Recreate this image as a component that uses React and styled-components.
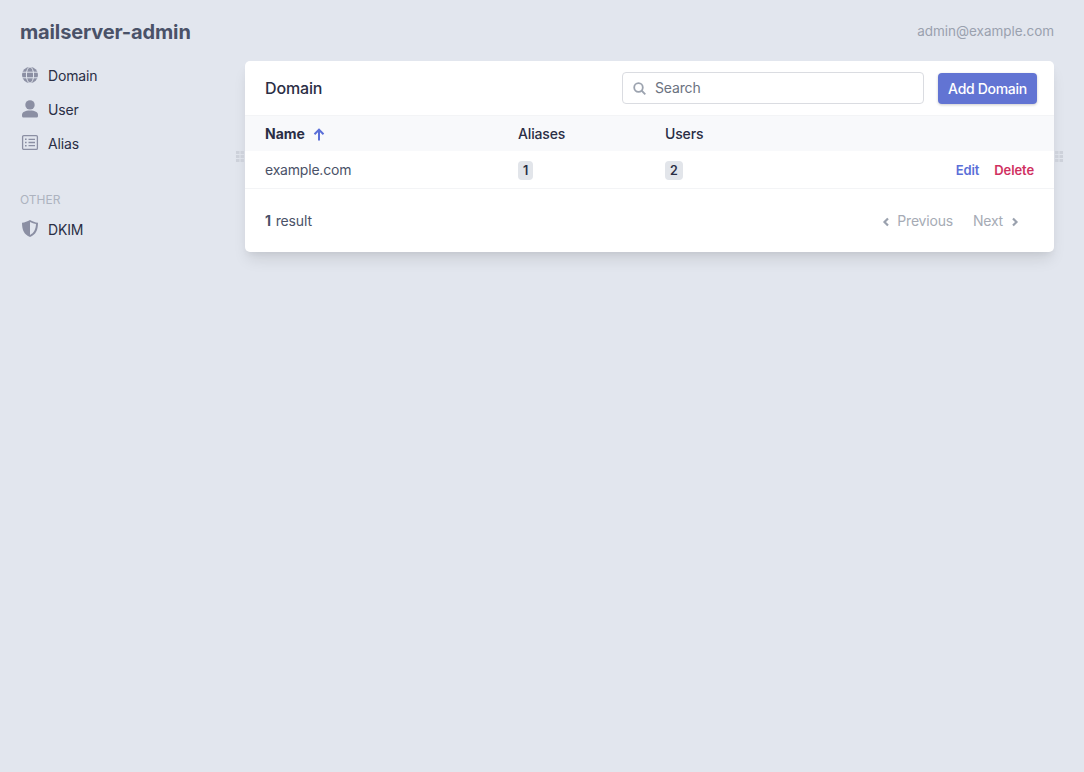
import React from "react";
import styled, { createGlobalStyle } from "styled-components";

const PAGE_BG = "#e2e6ee";

const GlobalStyle = createGlobalStyle`
  html, body {
    margin: 0;
    padding: 0;
    background: ${PAGE_BG};
  }
  body {
    font-family: Inter, "Liberation Sans", sans-serif;
    font-size: 14px;
    letter-spacing: -0.15px;
    color: #2a2e45;
  }
  * {
    box-sizing: border-box;
  }
`;

const Page = styled.div`
  min-height: 772px;
  padding: 20px 30px 0 20px;
`;

const Header = styled.header`
  display: flex;
  justify-content: space-between;
  align-items: center;
  height: 23px;
`;

const Brand = styled.h1`
  margin: 0;
  padding-top: 1px;
  font-size: 20px;
  line-height: 23px;
  font-weight: 700;
  letter-spacing: -0.14px;
  color: #4a5268;
`;

const Account = styled.span`
  font-size: 13.5px;
  line-height: 21px;
  letter-spacing: -0.03px;
  color: #9aa1ae;
`;

const Layout = styled.div`
  display: grid;
  grid-template-columns: 225px 809px;
  margin-top: 15px;
`;

const Sidebar = styled.nav`
  display: flex;
  flex-direction: column;
`;

const NavItem = styled.a`
  display: flex;
  align-items: center;
  gap: 8px;
  height: 34px;
  color: #2a2e45;
  font-size: 14px;
  svg {
    flex: none;
    color: #8b8fa3;
  }
`;

const NavHeading = styled.div`
  margin: 31px 0 4px;
  height: 17px;
  font-size: 12px;
  line-height: 17px;
  letter-spacing: 0;
  color: #adb3bf;
`;

const CardWrap = styled.div`
  position: relative;
  margin-top: 3px;
`;

const Card = styled.section`
  background: #fff;
  border-radius: 5px;
  box-shadow: 0 10px 15px -3px rgba(0, 0, 0, 0.1), 0 4px 6px -2px rgba(0, 0, 0, 0.05);
`;

const Handle = styled.svg`
  position: absolute;
  top: 90px;
  ${(p) => (p.$side === "left" ? "left: -9px;" : "right: -9px;")}
  color: #cdd1da;
`;

const CardHeader = styled.div`
  display: flex;
  align-items: center;
  height: 54px;
  padding: 0 17px 0 20px;
`;

const CardTitle = styled.h2`
  flex: 1;
  margin: 0;
  font-size: 16px;
  font-weight: 500;
  color: #2a2e45;
`;

const SearchBox = styled.label`
  display: flex;
  align-items: center;
  gap: 9px;
  width: 302px;
  height: 32px;
  padding: 0 10px;
  border: 1px solid #dadce1;
  border-radius: 4px;
  color: #6b7280;
  font-size: 14px;
  svg {
    flex: none;
    color: #9ca3af;
  }
`;

const SearchInput = styled.input`
  flex: 1;
  min-width: 0;
  height: 28px;
  border: 0;
  outline: 0;
  padding: 0 0 2px;
  background: transparent;
  font: inherit;
  letter-spacing: inherit;
  color: inherit;
  &::placeholder {
    color: #6b7280;
    opacity: 1;
  }
`;

const AddButton = styled.button`
  margin-left: 14px;
  width: 99px;
  height: 31px;
  padding: 0;
  border: 0;
  border-radius: 4px;
  background: #6274d3;
  color: #fff;
  font: 500 14px Inter, "Liberation Sans", sans-serif;
  letter-spacing: -0.3px;
  box-shadow: 0 1px 3px rgba(0, 0, 0, 0.2);
`;

const Table = styled.table`
  width: 100%;
  border-collapse: collapse;
  table-layout: fixed;
  font-size: 14px;
`;

const Head = styled.thead`
  background: #f8f9fb;
`;

const Th = styled.th`
  height: 35px;
  padding: 0 0 0 ${(p) => (p.$first ? "20px" : "0")};
  width: ${(p) => p.$width || "auto"};
  text-align: left;
  font-weight: ${(p) => (p.$sorted ? 700 : 500)};
  letter-spacing: ${(p) => (p.$sorted ? "0" : "-0.15px")};
  border-top: 1px solid #f3f4f6;
  color: #2a2e45;
`;

const SortArrow = styled.svg`
  margin-left: 8px;
  vertical-align: -2px;
  color: #5a6fd8;
`;

const Td = styled.td`
  height: 38px;
  padding: 0 0 0 ${(p) => (p.$first ? "20px" : "0")};
  border-bottom: 1px solid #f3f4f6;
  letter-spacing: -0.2px;
  color: #4a5268;
`;

const CountBadge = styled.span`
  display: inline-block;
  height: 19px;
  margin-top: 2px;
  padding: 0 5px;
  border-radius: 4px;
  background: #e2e5ea;
  color: #2a2e45;
  font-size: 12.5px;
  font-weight: 600;
  line-height: 19px;
  text-align: center;
  vertical-align: middle;
`;

const Actions = styled.div`
  display: flex;
  justify-content: flex-end;
  gap: 15px;
  padding: 1px 20px 0 0;
`;

const ActionLink = styled.a`
  font-size: 13px;
  font-weight: 600;
  letter-spacing: -0.1px;
  color: ${(p) => p.$color};
`;

const Footer = styled.div`
  display: flex;
  justify-content: space-between;
  align-items: center;
  height: 63px;
  padding: 0 34px 1px 20px;
  color: #4a5268;
`;

const ResultCount = styled.b`
  margin-right: 1px;
`;

const Pager = styled.div`
  display: flex;
  align-items: center;
  gap: 20px;
  letter-spacing: -0.2px;
  color: #a6abb5;
`;

const PagerItem = styled.span`
  display: flex;
  align-items: center;
  gap: ${(p) => p.$gap}px;
  svg {
    margin-top: 3px;
    color: #9aa1ae;
  }
`;

const GlobeIcon = () => (
  <svg width="20" height="20" viewBox="0 0 20 20">
    <circle cx="10" cy="10" r="8" fill="currentColor" />
    <g fill="none" stroke={PAGE_BG} strokeWidth="1">
      <ellipse cx="10" cy="10" rx="3.600" ry="8" />
      <path d="M2 7.200h16M2 12.800h16" />
    </g>
  </svg>
);

const UserIcon = () => (
  <svg width="20" height="20" viewBox="0 0 20 20" fill="currentColor">
    <circle cx="10" cy="5.900" r="4.700" />
    <path d="M2 16c0-3 3-4.500 8-4.500s8 1.500 8 4.500v1c0 .8-.5 1.500-1.500 1.500h-13C2.500 18.500 2 17.800 2 17z" />
  </svg>
);

const ListIcon = () => (
  <svg width="20" height="20" viewBox="0 0 20 20" fill="none" stroke="currentColor">
    <rect x="2.600" y="2.600" width="14.800" height="13.800" rx="1.200" strokeWidth="1.300" />
    <path d="M8.500 6.300h6.500M8.500 9.500h6.500M8.500 12.700h6.500" strokeWidth="1.300" />
    <path d="M5 6.300h1.600M5 9.500h1.600M5 12.700h1.600" strokeWidth="1.500" />
  </svg>
);

const ShieldIcon = () => (
  <svg width="20" height="20" viewBox="0 0 20 20" fill="currentColor">
    <path
      fillRule="evenodd"
      d="M10 1c2.600 1.600 5.200 2.500 8 2.700 0 7.300-2.200 12-8 14.300-5.800-2.300-8-7-8-14.300C4.800 3.500 7.400 2.600 10 1zm0 2.100v12.900c4-1.900 5.700-5.500 6-10.900-2.100-.2-4.100-.9-6-2z"
    />
  </svg>
);

const SearchIcon = () => (
  <svg width="13" height="13" viewBox="0 0 13 13" fill="none" stroke="currentColor" strokeWidth="1.800">
    <circle cx="5.500" cy="5.500" r="4.300" />
    <path d="M8.500 8.500l3.800 3.800" />
  </svg>
);

const Chevron = ({ dir }) => (
  <svg width="8" height="10" viewBox="0 0 8 10" fill="none" stroke="currentColor" strokeWidth="2.200">
    <path d={dir === "left" ? "M7 1.500L3.500 5 7 8.500" : "M1 1.500L4.500 5 1 8.500"} />
  </svg>
);

const DragHandle = ({ side }) => (
  <Handle $side={side} width="8" height="11" viewBox="0 0 8 11" fill="currentColor">
    {[0, 4, 8].map((y) =>
      [0, 4.500].map((x) => <rect key={`${x}-${y}`} x={x} y={y} width="3.500" height="3" />)
    )}
  </Handle>
);

const App = () => (
  <>
    <GlobalStyle />
    <Page>
      <Header>
        <Brand>mailserver-admin</Brand>
        <Account>admin@example.com</Account>
      </Header>
      <Layout>
        <Sidebar>
          <NavItem><GlobeIcon />Domain</NavItem>
          <NavItem><UserIcon />User</NavItem>
          <NavItem><ListIcon />Alias</NavItem>
          <NavHeading>OTHER</NavHeading>
          <NavItem><ShieldIcon />DKIM</NavItem>
        </Sidebar>
        <CardWrap>
          <DragHandle side="left" />
          <DragHandle side="right" />
          <Card>
            <CardHeader>
              <CardTitle>Domain</CardTitle>
              <SearchBox>
                <SearchIcon />
                <SearchInput placeholder="Search" />
              </SearchBox>
              <AddButton>Add Domain</AddButton>
            </CardHeader>
            <Table>
              <Head>
                <tr>
                  <Th $first $sorted $width="273px">
                    Name
                    <SortArrow width="12" height="13" viewBox="0 0 12 13" fill="none" stroke="currentColor" strokeWidth="2">
                      <path d="M6 12.500V1.800M1.500 6.200L6 1.700l4.500 4.500" />
                    </SortArrow>
                  </Th>
                  <Th $width="147px">Aliases</Th>
                  <Th $width="200px">Users</Th>
                  <Th />
                </tr>
              </Head>
              <tbody>
                <tr>
                  <Td $first>example.com</Td>
                  <Td><CountBadge>1</CountBadge></Td>
                  <Td><CountBadge>2</CountBadge></Td>
                  <Td>
                    <Actions>
                      <ActionLink $color="#5a6fd8">Edit</ActionLink>
                      <ActionLink $color="#d0305f">Delete</ActionLink>
                    </Actions>
                  </Td>
                </tr>
              </tbody>
            </Table>
            <Footer>
              <span><ResultCount>1</ResultCount> result</span>
              <Pager>
                <PagerItem $gap={8}><Chevron dir="left" />Previous</PagerItem>
                <PagerItem $gap={9}>Next<Chevron dir="right" /></PagerItem>
              </Pager>
            </Footer>
          </Card>
        </CardWrap>
      </Layout>
    </Page>
  </>
);

export default App;
